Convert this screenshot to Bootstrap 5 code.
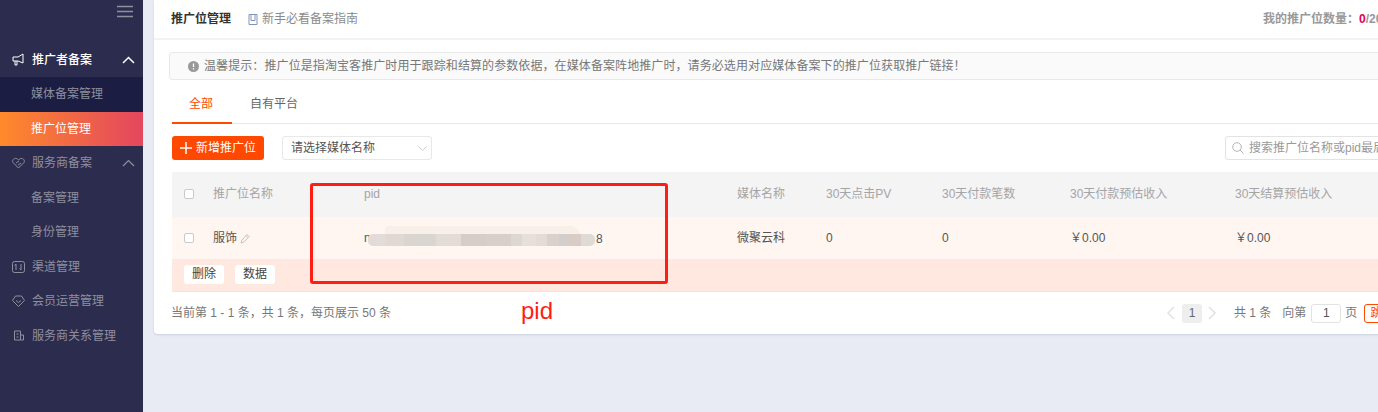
<!DOCTYPE html>
<html lang="zh-CN">
<head>
    <meta charset="UTF-8">
    <meta name="viewport" content="width=device-width, initial-scale=1.0">
    <title>推广位管理</title>
    <link href="https://cdn.jsdelivr.net/npm/bootstrap@5.3.0/dist/css/bootstrap.min.css" rel="stylesheet">
    <style>
        html, body { height: 412px; overflow: hidden; }
        body { background: #e8ebf3; font-family: "Liberation Sans", "Noto Sans CJK SC", sans-serif; font-size: 12px; color: #666; }
        .page-wrap { width: 1500px; height: 412px; }
        .side { width: 143px; height: 412px; background: #2b2c4e; color: #8f8f9f; flex: none; }
        .side-top { height: 42.5px; padding: 5px 10px 0 0; }
        .side-group { height: 34.5px; padding: 0 8px 0 12px; font-size: 12px; }
        .side-group.on { color: #fff; font-weight: 500; }
        .side-group svg.ico { margin-right: 7px; flex: none; }
        .side-sub { height: 34.5px; padding-left: 31px; font-size: 12px; }
        .side-sub.dark { background: #1c1d42; }
        .side-sub.active-item { background: linear-gradient(90deg, #ff8a2b, #e3465f); color: #fff; }
        .main-card { width: 1300px; height: 334px; margin-left: 11px; background: #fff; border-radius: 0 0 4px 4px; box-shadow: 0 1px 2px rgba(120,130,160,.25); position: relative; flex: none; }
        .head-bar { height: 40px; border-bottom: 2px solid #f3f3f3; padding: 0 0 0 17px; }
        .head-title { color: #333; font-size: 12px; font-weight: 600; }
        .head-link { color: #8a8a8a; margin-left: 17px; }
        .head-count { position: absolute; left: 1109px; top: 10px; font-weight: 700; color: #999; white-space: nowrap; }
        .head-count b { color: #e5004f; }
        .notice-bar { margin: 12px 0 0 15px; height: 28px; background: #fafafa; border: 1px solid #e8e8e8; border-radius: 3px; padding-left: 18px; color: #777; letter-spacing: .09px; }
        .notice-bar svg { margin-right: 5px; }
        .tab-row { margin-left: 18px; height: 44px; border-bottom: 1px solid #e8e8e8; }
        .tab-one { width: 60px; height: 44px; line-height: 49px; padding-right: 2px; text-align: center; color: #ff4800; border-bottom: 2px solid #ff4800; }
        .tab-two { margin-left: 18px; line-height: 49px; color: #666; }
        .tool-row { margin: 12px 0 0 18px; height: 24px; }
        .add-btn { width: 92px; height: 24px; padding: 0; background: #ff4800; color: #fff; border: 0; border-radius: 3px; font-size: 12px; }
        .media-pick { width: 150px; height: 24px; margin-left: 18px; border: 1px solid #e8e8e8; border-radius: 3px; padding: 0 4px 0 8px; color: #555; }
        .find-box { position: absolute; left: 1071px; top: 136px; width: 200px; height: 24px; border: 1px solid #e3e3e3; border-radius: 3px; padding-left: 6px; color: #999; white-space: nowrap; }
        .find-box svg { margin-right: 5px; }
        .pid-table { margin: 12px 0 0 18px; width: 1250px; table-layout: fixed; border-collapse: collapse; }
        .pid-table th { background: #f4f4f5; height: 45px; font-weight: 400; color: #a5a5a5; padding: 0 0 2px 0; }
        .pid-table th:nth-child(1) { width: 41px; }
        .pid-table th:nth-child(2) { width: 151px; }
        .pid-table th:nth-child(3) { width: 373px; }
        .pid-table th:nth-child(4) { width: 89px; }
        .pid-table th:nth-child(5) { width: 116px; }
        .pid-table th:nth-child(6) { width: 128px; }
        .pid-table th:nth-child(7) { width: 165px; }
        .pid-table th:nth-child(8) { width: 187px; }
        .pid-table td { height: 42px; background: #fff6f1; color: #555; padding: 0; }
        .pid-table tr.act-row td { height: 32px; background: #ffe8e0; border-bottom: 1px solid #e8e8ec; padding-left: 12px; }
        .tick { display: block; width: 10px; height: 10px; margin-left: 12px; border: 1px solid #c9c9c9; border-radius: 2px; background: #fff; }
        .mini-btn { display: inline-block; width: 40px; height: 19px; line-height: 19px; text-align: center; background: #fff; border-radius: 3px; color: #444; margin-right: 11px; }
        .blur-top { position: absolute; left: 385px; top: 226px; width: 195px; height: 9px; border-radius: 12px 30px 0 0; background: #f9efe9; }
        .blur-strip { position: absolute; left: 368px; top: 234px; width: 227px; height: 12px; border-radius: 5px; background: linear-gradient(90deg, #e3dbd7 0 8%, #e1d8d3 8% 16%, #d9d5d0 16% 30%, #e2dbd6 30% 41%, #d6ccc8 41% 52%, #d8cfca 52% 63%, #dcd7d3 63% 68%, #e6e0d8 68% 74%, #e4dad7 74% 79%, #dad1cd 79% 84%, #d3cecb 84% 89%, #d9ccc6 89% 94%, #dfdad5 94%); }
        .pid-tail { position: absolute; left: 596px; top: 230px; color: #555; }
        .foot-row { margin-left: 17px; height: 43px; position: relative; color: #777; }
        .pager { position: absolute; left: 995px; top: 12px; white-space: nowrap; }
        .pager-num { width: 20px; height: 19px; line-height: 19px; text-align: center; background: #eee; border-radius: 3px; margin: 0 6px 0 7px; color: #666; }
        .pager-total { margin-left: 17px; }
        .pager-to { margin-left: 11px; }
        .pager-input { width: 30px; height: 19px; line-height: 17px; text-align: center; border: 1px solid #e3e3e3; border-radius: 3px; margin: 0 4px 0 5px; color: #555; }
        .pager-go { width: 40px; height: 19px; line-height: 17px; border: 1px solid #ff4800; border-radius: 3px; margin-left: 7px; padding-left: 5px; color: #ff4800; }
        .mark-box { position: absolute; left: 310px; top: 183px; width: 358px; height: 101px; border: 3px solid #ff1e14; border-radius: 3px; }
        .mark-text { position: absolute; left: 521px; top: 297px; font-size: 24px; line-height: 28px; color: #ff1e14; }
    </style>
</head>
<body>
<div class="page-wrap d-flex position-relative">
    <!-- Sidebar -->
    <div class="side">
        <div class="side-top d-flex justify-content-end">
            <svg width="16" height="13" viewBox="0 0 16 13"><path d="M0 1.5h16M0 6.5h16M0 11.5h16" stroke="#8f8f9f" stroke-width="1.5" fill="none"/></svg>
        </div>
        <div class="side-group on d-flex align-items-center">
            <svg class="ico" width="13" height="13" viewBox="0 0 13 13" fill="none" stroke="#fff"><path d="M1 4h5l5-3v9L6 8H1zM3 8v4h2V8"/></svg>
            <span class="flex-grow-1">推广者备案</span>
            <svg width="13" height="8" viewBox="0 0 13 8" fill="none" stroke="#fff" stroke-width="1.5"><path d="M1 7l5.5-5.5L12 7"/></svg>
        </div>
        <div class="side-sub dark d-flex align-items-center">媒体备案管理</div>
        <div class="side-sub active-item d-flex align-items-center">推广位管理</div>
        <div class="side-group d-flex align-items-center">
            <svg class="ico" width="13" height="12" viewBox="0 0 13 12" fill="none" stroke="#8f8f9f"><path d="M6.5 11L1 5.5C-.5 2.500 3.500-.5 6.500 3c3-3.500 7-.5 5.500 2.500zM4 6l3-2M6 8l3-2"/></svg>
            <span class="flex-grow-1">服务商备案</span>
            <svg width="13" height="8" viewBox="0 0 13 8" fill="none" stroke="#8f8f9f" stroke-width="1.2"><path d="M1 7l5.500-5.500L12 7"/></svg>
        </div>
        <div class="side-sub d-flex align-items-center">备案管理</div>
        <div class="side-sub d-flex align-items-center">身份管理</div>
        <div class="side-group d-flex align-items-center">
            <svg class="ico" width="13" height="12" viewBox="0 0 13 12" fill="none" stroke="#8f8f9f"><rect x=".5" y=".5" width="12" height="11" rx="2"/><path d="M4 9V3M2.500 4.500L4 3M9 3v6M7.500 7.500L9 9"/></svg>
            <span>渠道管理</span>
        </div>
        <div class="side-group d-flex align-items-center">
            <svg class="ico" width="13" height="12" viewBox="0 0 13 12" fill="none" stroke="#8f8f9f"><path d="M3.500 1h6l3 4.500-6 6-6-6zM4 5.500l2.500 2 2.500-2"/></svg>
            <span>会员运营管理</span>
        </div>
        <div class="side-group d-flex align-items-center">
            <svg class="ico" width="13" height="11" viewBox="0 0 13 11" fill="none" stroke="#8f8f9f"><path d="M2.500 1h6v9h-6zM8.500 5h3v5h-3M4.500 4h2M4.500 7h2"/></svg>
            <span>服务商关系管理</span>
        </div>
    </div>

    <!-- Main card -->
    <div class="main-card">
        <div class="head-bar d-flex align-items-center">
            <span class="head-title">推广位管理</span>
            <span class="head-link d-flex align-items-center">
                <svg class="me-1" width="10" height="11" viewBox="0 0 10 11" fill="none" stroke="#8094b8"><path d="M1 .5h8v10H1zM3 .5v6h4v-6"/></svg>新手必看备案指南
            </span>
        </div>
        <div class="head-count">我的推广位数量：<b>0</b>/20</div>
        <div class="notice-bar d-flex align-items-center">
            <svg width="11" height="11" viewBox="0 0 11 11"><circle cx="5.500" cy="5.500" r="5.500" fill="#999"/><path d="M5.500 2.500v3.500M5.500 7.300v1.300" stroke="#fff" stroke-width="1.300"/></svg>
            <span>温馨提示：推广位是指淘宝客推广时用于跟踪和结算的参数依据，在媒体备案阵地推广时，请务必选用对应媒体备案下的推广位获取推广链接！</span>
        </div>
        <div class="tab-row d-flex">
            <div class="tab-one">全部</div>
            <div class="tab-two">自有平台</div>
        </div>
        <div class="tool-row d-flex">
            <button type="button" class="add-btn d-flex align-items-center justify-content-center">
                <svg class="me-1" width="12" height="12" viewBox="0 0 12 12"><path d="M6 0v12M0 6h12" stroke="#fff" stroke-width="1.500"/></svg>新增推广位
            </button>
            <div class="media-pick d-flex align-items-center justify-content-between">
                <span>请选择媒体名称</span>
                <svg width="9" height="5" viewBox="0 0 9 5" fill="none" stroke="#ccc"><path d="M.5.500l4 4 4-4"/></svg>
            </div>
        </div>
        <div class="find-box d-flex align-items-center">
            <svg width="12" height="12" viewBox="0 0 12 12" fill="none" stroke="#b5b5b5"><circle cx="5" cy="5" r="4.300"/><path d="M8 8l3.500 3.500"/></svg>
            <span>搜索推广位名称或pid最后一段</span>
        </div>
        <table class="pid-table">
            <thead>
                <tr>
                    <th><span class="tick"></span></th>
                    <th>推广位名称</th>
                    <th>pid</th>
                    <th>媒体名称</th>
                    <th>30天点击PV</th>
                    <th>30天付款笔数</th>
                    <th>30天付款预估收入</th>
                    <th>30天结算预估收入</th>
                </tr>
            </thead>
            <tbody>
                <tr>
                    <td><span class="tick"></span></td>
                    <td>服饰
                        <svg width="11" height="11" viewBox="0 0 11 11" fill="none" stroke="#c4c4c4"><path d="M1 10l1-3 5-5.500 2 2L4 9zM6 2.500l2 2"/></svg>
                    </td>
                    <td>n</td>
                    <td>微聚云科</td>
                    <td>0</td>
                    <td>0</td>
                    <td>￥0.00</td>
                    <td>￥0.00</td>
                </tr>
                <tr class="act-row">
                    <td colspan="8"><span class="mini-btn">删除</span><span class="mini-btn">数据</span></td>
                </tr>
            </tbody>
        </table>
        <div class="foot-row d-flex align-items-center">
            <span>当前第 1 - 1 条，共 1 条，每页展示 50 条</span>
            <div class="pager d-flex align-items-center">
                <svg width="9" height="14" viewBox="0 0 9 14" fill="none" stroke="#e2e2e2" stroke-width="1.500"><path d="M8 1L2 7l6 6"/></svg>
                <span class="pager-num">1</span>
                <svg width="9" height="14" viewBox="0 0 9 14" fill="none" stroke="#e2e2e2" stroke-width="1.500"><path d="M1 1l6 6-6 6"/></svg>
                <span class="pager-total">共 1 条</span>
                <span class="pager-to">向第</span>
                <span class="pager-input">1</span>
                <span>页</span>
                <span class="pager-go">跳转</span>
            </div>
        </div>
    </div>

    <!-- Annotations over the screenshot -->
    <div class="blur-top"></div>
    <div class="blur-strip"></div>
    <span class="pid-tail">8</span>
    <div class="mark-box"></div>
    <div class="mark-text">pid</div>
</div>
<script src="https://cdn.jsdelivr.net/npm/bootstrap@5.3.0/dist/js/bootstrap.bundle.min.js"></script>
</body>
</html>
